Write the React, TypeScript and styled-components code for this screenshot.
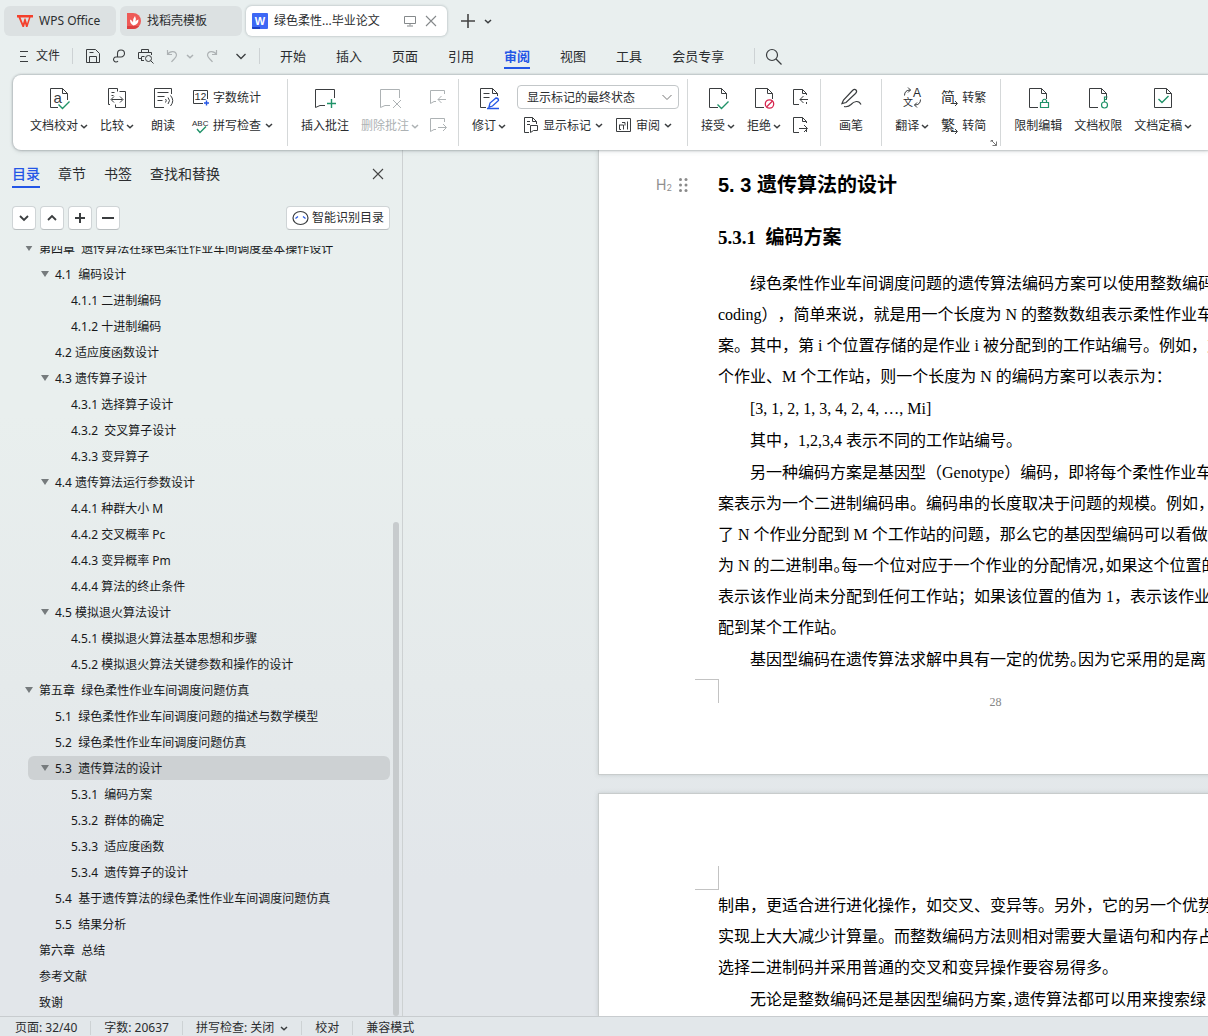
import React from "react";
import styled, { createGlobalStyle, css } from "styled-components";

const UI_FONT = `"Noto Sans", "Noto Sans CJK SC", sans-serif`;
const DOC_FONT = `"Liberation Serif", "Noto Sans CJK SC", serif`;
const INK = "#2b2d2f";
const BLUE = "#2456e6";
const GREEN = "#1f9268";
const FADED = "#adb2b4";

const GlobalStyle = createGlobalStyle`
  *, *::before, *::after { box-sizing: border-box; }
  body { margin: 0; overflow: hidden; }
  button, select { font: inherit; color: inherit; margin: 0; padding: 0; border: 0; background: none; cursor: pointer; }
  svg { display: block; flex: none; overflow: visible; }
`;

const Shell = styled.div`
  display: flex;
  flex-direction: column;
  height: 100vh;
  overflow: hidden;
  font: 12px/16px ${UI_FONT};
  color: ${INK};
  background: linear-gradient(180deg, #e9efef 0%, #e9efee 40%, #e5eaeb 66%, #e2e6ea 85%, #e2e6ea 100%);
`;

/* ---------- title bar ---------- */

const TitleBar = styled.header`
  display: flex;
  align-items: center;
  gap: 4px;
  padding: 6px 4px 5px;
`;

const DocTab = styled.div<{ $width: number; $active?: boolean }>`
  display: flex;
  align-items: center;
  gap: 6px;
  width: ${(p) => p.$width}px;
  height: 30px;
  padding: 0 8px 0 6px;
  border-radius: 6px;
  background: ${(p) => (p.$active ? "#fff" : "#dce1e2")};
  box-shadow: ${(p) => (p.$active ? "0 0 2px 1px rgba(90, 105, 110, 0.22)" : "none")};
`;

const TabTitle = styled.button<{ $inset?: boolean }>`
  display: flex;
  align-items: center;
  gap: 6px;
  flex: 1;
  white-space: nowrap;
  padding-left: ${(p) => (p.$inset ? 7 : 0)}px;
`;

const NewTab = styled.div`
  display: flex;
`;

const PlainButton = styled.button<{ $w: number }>`
  display: grid;
  place-items: center;
  width: ${(p) => p.$w}px;
  height: 24px;
`;

/* ---------- menu row ---------- */

const MenuRow = styled.nav`
  display: flex;
  align-items: center;
  height: 30px;
  margin-bottom: 4px;
  padding-left: 18px;
`;

const FileMenu = styled.button`
  display: flex;
  align-items: center;
  gap: 6px;
  margin-right: 12px;
`;

const Rule = styled.span`
  width: 1px;
  height: 16px;
  background: #cdd2d4;
`;

const QuickTools = styled.div`
  display: flex;
  align-items: center;
  padding: 0 7px;
`;

const MenuTabs = styled.div`
  display: flex;
  gap: 30px;
  padding: 0 30px 0 20px;
`;

const MenuTab = styled.button<{ $active?: boolean }>`
  height: 26px;
  padding-top: 1px;
  font-size: 13px;
  line-height: 20px;
  border-bottom: 2px solid transparent;
  ${(p) => p.$active && css`
    color: ${BLUE};
    font-weight: 700;
    border-bottom-color: ${BLUE};
  `}
`;

/* ---------- ribbon ---------- */

const Ribbon = styled.section`
  position: relative;
  z-index: 1;
  display: flex;
  height: 75px;
  margin-left: 13px;
  padding: 4px 0 4px 4px;
  flex: none;
  border-radius: 8px 0 0 8px;
  background: #fff;
  box-shadow: 0 0 2px 1px rgba(100, 110, 115, 0.35), 0 2px 4px rgba(100, 110, 115, 0.15);
`;

const Group = styled.div`
  position: relative;
  display: flex;
  padding: 0 7px;
  flex: none;
  & + & { border-left: 1px solid #d5d8d9; }
`;

const BigTool = styled.button<{ $off?: boolean }>`
  display: flex;
  flex-direction: column;
  align-items: center;
  gap: 8px;
  min-width: 46px;
  padding: 7px 6px 0;
  white-space: nowrap;
  color: ${(p) => (p.$off ? FADED : INK)};
`;

const Label = styled.span`
  display: flex;
  align-items: center;
  gap: 2px;
`;

const Stack = styled.div`
  display: flex;
  flex-direction: column;
  gap: 4px;
  padding: 6px 1px 0 0;
`;

const IconStack = styled(Stack)`
  padding-right: 0;
`;

const RowOfTools = styled.div`
  display: flex;
  padding-left: 4px;
`;

const SmallTool = styled.button`
  display: flex;
  align-items: center;
  gap: 4px;
  height: 24px;
  padding: 0 6px;
  white-space: nowrap;
`;

const SmallLabel = styled.span`
  padding-top: 2px;
`;

const SelectBox = styled.div`
  display: grid;
  align-items: center;
  width: 162px;
  height: 24px;
  margin-left: 5px;
  > * { grid-area: 1 / 1; }
  > svg { justify-self: end; margin-right: 6px; pointer-events: none; }
`;

const MarkupSelect = styled.select`
  width: 100%;
  height: 24px;
  padding: 2px 24px 0 9px;
  appearance: none;
  border: 1px solid #c3c7c9;
  border-radius: 4px;
  background: #fff;
`;

const Launcher = styled.button`
  position: absolute;
  right: 2px;
  bottom: -1px;
`;

/* ---------- workspace ---------- */

const Workspace = styled.main`
  display: flex;
  flex: 1;
  min-height: 0;
`;

const Sidebar = styled.aside`
  display: flex;
  flex-direction: column;
  flex: none;
  width: 403px;
  border-right: 1px solid #cdd1d2;
`;

const SideTabs = styled.div`
  display: flex;
  align-items: flex-start;
  gap: 18px;
  height: 40px;
  padding: 12px 12px 0;
`;

const SideTab = styled.button<{ $active?: boolean }>`
  height: 26px;
  font-size: 14px;
  line-height: 24px;
  border-bottom: 2px solid ${(p) => (p.$active ? BLUE : "transparent")};
  color: ${(p) => (p.$active ? BLUE : INK)};
  font-weight: ${(p) => (p.$active ? 500 : 400)};
`;

const CloseButton = styled(PlainButton)`
  margin-left: auto;
`;

const SideTools = styled.div`
  display: flex;
  gap: 4px;
  padding: 16px 12px;
`;

const ToolButton = styled.button`
  display: flex;
  align-items: center;
  justify-content: center;
  gap: 3px;
  min-width: 24px;
  height: 24px;
  padding: 0 5px;
  border: 1px solid #cfd4d6;
  border-bottom-color: #b9bec0;
  border-radius: 4px;
  background: #fff;
`;

const SmartButton = styled(ToolButton)`
  margin-left: auto;
`;

const Outline = styled.div`
  display: flex;
  flex: 1;
  min-height: 0;
  gap: 3px;
  overflow: hidden;
`;

const OutlineList = styled.ul`
  flex: 1;
  margin: -11px 0 0;
  padding: 0;
  list-style: none;
`;

const OutlineItem = styled.li<{ $level: number; $selected?: boolean }>`
  display: flex;
  align-items: center;
  height: 24px;
  margin: 1px 0 2px ${(p) => p.$level * 16 - 4}px;
  border-radius: 6px;
  background: ${(p) => (p.$selected ? "#cdd1d3" : "none")};
  color: #17191b;
`;

const Twisty = styled.span`
  display: flex;
  justify-content: center;
  width: 27px;
  padding-left: 6px;
`;

const OutlineLink = styled.a`
  padding-top: 2px;
  color: inherit;
  text-decoration: none;
  white-space: pre;
`;

const ScrollTrack = styled.div`
  width: 6px;
  margin-right: 3px;
  padding-top: 276px;
`;

const ScrollThumb = styled.div`
  height: 100%;
  border-radius: 3px;
  background: #c7cbcd;
`;

/* ---------- document ---------- */

const Canvas = styled.div`
  flex: 1;
  min-width: 0;
  padding-left: 195px;
  overflow: hidden;
`;

const Page = styled.article`
  width: 795px;
  margin-bottom: 18px;
  border: 1px solid #c8cccc;
  background: #fff;
  color: #000;
  box-shadow: 0 0 4px rgba(110, 120, 120, 0.25);
  font-family: ${DOC_FONT};
`;

const ContinuedPage = styled(Page)`
  border-top: 0;
  padding-top: 20px;
`;

const HeadingRow = styled.div`
  display: flex;
  align-items: center;
  height: 30px;
  margin-bottom: 22px;
`;

const Gutter = styled.div`
  display: flex;
  align-items: center;
  gap: 7px;
  width: 119px;
  padding-left: 57px;
  color: #8f8f8f;
  font: 14px/16px Inter, sans-serif;
  sub { font-size: 9px; line-height: 8px; vertical-align: -1px; }
`;

const Heading2 = styled.h2`
  margin: 0;
  font: 700 20px/32px "Liberation Sans", "Noto Sans CJK SC", sans-serif;
  white-space: pre;
`;

const Heading3 = styled.h3`
  margin: 0 0 14px 119px;
  font-size: 19px;
  line-height: 32px;
  white-space: pre;
`;

const Body = styled.div`
  padding: 0 0 0 119px;
  font-size: 16px;
  line-height: 31px;
  text-spacing-trim: space-all;
`;

const Para = styled.p<{ $cont?: boolean }>`
  margin: 0 0 1px;
  text-indent: ${(p) => (p.$cont ? 0 : 32)}px;
  white-space: pre;
`;

const Half = styled.span`
  font-feature-settings: "halt";
`;

const PageFoot = styled.footer`
  display: grid;
  grid-template-columns: 120px 1fr 120px;
  height: 95px;
  margin-top: 4px;
`;

const PageHead = styled.div`
  display: grid;
  grid-template-columns: 120px 1fr;
  align-items: end;
  height: 96px;
`;

const CropMark = styled.i<{ $at: "top" | "bottom" }>`
  justify-self: end;
  width: 24px;
  height: 24px;
  border-right: 1px solid #c3c3c3;
  border-${(p) => p.$at}: 1px solid #c3c3c3;
`;

const PageNumber = styled.span`
  justify-self: center;
  padding-top: 15px;
  font-size: 12px;
  line-height: 16px;
  color: #858585;
`;

/* ---------- status bar ---------- */

const StatusBar = styled.footer`
  display: flex;
  align-items: center;
  gap: 13px;
  height: 20px;
  flex: none;
  padding: 2px 0 0 15px;
  border-top: 1px solid #c8cccf;
  background: #e2e7ea;
  white-space: nowrap;
`;

const StatusButton = styled.button`
  display: flex;
  align-items: center;
  gap: 6px;
`;

const StatusRule = styled(Rule)`
  height: 14px;
`;

/* ---------- icons ---------- */

type IconProps = { w?: number; h?: number; c?: string; s?: number; children: React.ReactNode };

const Svg = ({ w = 24, h = 24, c = "#3a3d3f", s = 1, children }: IconProps) => (
  <svg width={w} height={h} viewBox={`0 0 ${w} ${h}`} fill="none" stroke={c} strokeWidth={s} aria-hidden="true">
    {children}
  </svg>
);

const Chevron = ({ c = "#3a3d3f" }: { c?: string }) => (
  <Svg w={8} h={8} c={c} s={1.5}><path d="M1 3l3 2.8L7 3" /></Svg>
);

const WideChevron = () => <Svg w={12} h={12} s={1.3}><path d="M1.5 4 6 8.500 10.500 4" /></Svg>;

const Cross = ({ c = "#555" }: { c?: string }) => (
  <Svg w={12} h={12} c={c} s={1.1}><path d="M1 1l10 10M11 1 1 11" /></Svg>
);

const Sheet = ({ children }: { children?: React.ReactNode }) => (
  <Svg>
    <path d="M12 21.5H3.500v-19h12l5 5V13M15.500 2.500v5h5" />
    {children}
  </Svg>
);

const ProofIcon = () => (
  <Svg>
    <path d="M11 21.500H3.500v-19h12l5 5V14M15.500 2.500v5h5" />
    <text x="6.5" y="17" fontFamily="Liberation Sans" fontSize="15" fill="#3a3d3f" stroke="none">a</text>
    <path d="m11.500 18.500 4 4 7-7" stroke={GREEN} strokeWidth="1.4" />
  </Svg>
);

const CompareIcon = () => (
  <Svg>
    <path d="M5 18.500H3.500v-16h9v3M14.500 5.500h6v16h-10v-3M6.500 6.500h3M6.500 9.500h2" />
    <path d="M6.500 13.500h11M9 10.500l-3 3 3 3M15 10.500l3 3-3 3" />
  </Svg>
);

const ReadIcon = () => (
  <Svg>
    <path d="M13 21.500H3.500v-19h17V8M6.500 6.500h11M6.500 10.500h7M6.500 14.500h5" />
    <path d="M14.500 13q1.500 1.500 0 3.500M17 11.500q3 3 0 6.500M19.500 9.500q4.500 5 0 10.500" />
  </Svg>
);

const CountIcon = () => (
  <Svg w={17} h={18}>
    <path d="M11 15.500H1.500v-13h14V11" />
    <text x="2.5" y="12" fontFamily="Liberation Mono" fontSize="10" fill={INK} stroke="none">12</text>
    <path d="M14.500 12.500v5M12 15h5" stroke={BLUE} strokeWidth="1.4" />
  </Svg>
);

const SpellIcon = () => (
  <Svg w={17} h={18}>
    <text x="0" y="10" fontFamily="Liberation Sans" fontSize="8" fill={INK} stroke="none">ABC</text>
    <path d="m5 13 3 3.500 6-6" stroke={GREEN} strokeWidth="1.4" />
  </Svg>
);

const Bubble = ({ c, children }: { c?: string; children: React.ReactNode }) => (
  <Svg c={c}>
    <path d="M12 19.500H7l-4.500 2v-18h19V12" />
    {children}
  </Svg>
);

const SmallBubble = ({ next }: { next?: boolean }) => (
  <Svg w={18} h={18} c={FADED}>
    <path d="M7 13.500H5l-3.500 2v-13h14V6" />
    <path d={next ? "M9 11.500h8M14 8l3.500 3.500L14 15" : "M17 11.500H9M12.500 8 9 11.500l3.500 3.500"} />
  </Svg>
);

const ReviseIcon = () => (
  <Svg>
    <path d="M9 21.500H3.500v-19h12l5 5V10M15.500 2.500v5h5M6.500 7.500h6M6.500 11.500h6" />
    <path d="m12 21 1-4 6-5q2.500 0 2.500 2.500l-6 5.500zM10 22.500h12" stroke={BLUE} strokeWidth="1.3" />
  </Svg>
);

const MarkupIcon = () => (
  <Svg w={17} h={18}>
    <path d="M7 16.500H2.500v-15h8l4 4V8M10.500 1.500v4h4M5 5.500h3M5 8.500h3M8.500 16.500v-7h7v5h-4z" />
  </Svg>
);

const PaneIcon = () => (
  <Svg w={17} h={18}>
    <path d="M1.500 2.500h14v13h-14zM4 9h4.500v4.500M4.500 9v4.500H6M7 6.500h3v3M12.500 5.500v8" />
  </Svg>
);

const SmallSheet = ({ next }: { next?: boolean }) => (
  <Svg w={18} h={18}>
    <path d="M8 16.500H2.500v-15h9l4 4V7M11.500 1.500v4h4M15.500 14v2" />
    <path d={next ? "M8 12.500h8M13 9l3.500 3.500L13 16" : "M17 11.500H9M12.500 8 9 11.500l3.500 3.500"} />
  </Svg>
);

const PenIcon = () => (
  <Svg s={1.2}>
    <path d="M3 17.500 4.500 14l9-9.500q2-2 3.500-.5t-.5 3.500l-9.500 9z" />
    <path d="M5 20.500q4 1 7-2c3-3.500 8-4.500 10 0" />
  </Svg>
);

const TranslateIcon = () => (
  <Svg>
    <text x="13" y="11" fontFamily="Liberation Sans" fontSize="12" fill={INK} stroke="none">A</text>
    <text x="3" y="20" fontFamily="Noto Sans CJK SC" fontSize="10" fill={INK} stroke="none">文</text>
    <path d="M4.500 9.500q0-5.500 6-5.500M8 1.500 10.500 4 8 6.500M20.500 13.500q0 5.500-6 5.500M17 16.500 14.500 19l2.500 2.500" />
  </Svg>
);

const ConvertIcon = ({ glyph }: { glyph: string }) => (
  <Svg w={17} h={18}>
    <text x="0" y="14" fontFamily="Noto Sans CJK SC" fontSize="14" fill={INK} stroke="none">{glyph}</text>
    <path d="M10 15.500h6M14 13l2.500 2.500L14 18" />
  </Svg>
);

const Twist = () => (
  <svg width="8" height="6" viewBox="0 0 8 6" aria-hidden="true"><path d="M0 0h8L4 6z" fill="#767b7d" /></svg>
);

const Drag = () => (
  <svg width="9" height="14" viewBox="0 0 9 14" fill="#8a8a8a" aria-hidden="true">
    {[1.5, 7, 12.5].map((y) => (
      <g key={y}><circle cx="1.5" cy={y} r="1.5" /><circle cx="7" cy={y} r="1.5" /></g>
    ))}
  </svg>
);

/* ---------- data ---------- */

type Entry = { level: number; text: string; open?: boolean; selected?: boolean };

const entries: Entry[] = [
  { level: 1, text: "第四章  遗传算法在绿色柔性作业车间调度基本操作设计", open: true },
  { level: 2, text: "4.1  编码设计", open: true },
  { level: 3, text: "4.1.1 二进制编码" },
  { level: 3, text: "4.1.2 十进制编码" },
  { level: 2, text: "4.2 适应度函数设计" },
  { level: 2, text: "4.3 遗传算子设计", open: true },
  { level: 3, text: "4.3.1 选择算子设计" },
  { level: 3, text: "4.3.2  交叉算子设计" },
  { level: 3, text: "4.3.3 变异算子" },
  { level: 2, text: "4.4 遗传算法运行参数设计", open: true },
  { level: 3, text: "4.4.1 种群大小 M" },
  { level: 3, text: "4.4.2 交叉概率 Pc" },
  { level: 3, text: "4.4.3 变异概率 Pm" },
  { level: 3, text: "4.4.4 算法的终止条件" },
  { level: 2, text: "4.5 模拟退火算法设计", open: true },
  { level: 3, text: "4.5.1 模拟退火算法基本思想和步骤" },
  { level: 3, text: "4.5.2 模拟退火算法关键参数和操作的设计" },
  { level: 1, text: "第五章  绿色柔性作业车间调度问题仿真", open: true },
  { level: 2, text: "5.1  绿色柔性作业车间调度问题的描述与数学模型" },
  { level: 2, text: "5.2  绿色柔性作业车间调度问题仿真" },
  { level: 2, text: "5.3  遗传算法的设计", open: true, selected: true },
  { level: 3, text: "5.3.1  编码方案" },
  { level: 3, text: "5.3.2  群体的确定" },
  { level: 3, text: "5.3.3  适应度函数" },
  { level: 3, text: "5.3.4  遗传算子的设计" },
  { level: 2, text: "5.4  基于遗传算法的绿色柔性作业车间调度问题仿真" },
  { level: 2, text: "5.5  结果分析" },
  { level: 1, text: "第六章  总结" },
  { level: 1, text: "参考文献" },
  { level: 1, text: "致谢" },
];

const menuTabs = ["开始", "插入", "页面", "引用", "审阅", "视图", "工具", "会员专享"];

type ToolProps = { icon: React.ReactNode; label: string; drop?: boolean; off?: boolean };

const Big = ({ icon, label, drop, off }: ToolProps) => (
  <BigTool $off={off} disabled={off}>
    {icon}
    <Label>{label}{drop && <Chevron c={off ? FADED : undefined} />}</Label>
  </BigTool>
);

const Small = ({ icon, label, drop }: ToolProps) => (
  <SmallTool>{icon}<SmallLabel>{label}</SmallLabel>{drop && <Chevron />}</SmallTool>
);

/* ---------- sections ---------- */

const Titles = () => (
  <TitleBar>
    <DocTab $width={112}>
      <TabTitle $inset>
        <svg width="16" height="12" viewBox="0 0 16 12" aria-hidden="true">
          <path d="M0 0h16v2.500h-2.500L10.500 12H9L8 8.500 7 12H5.500L1.500 2.500H0zM3.500 2.500 6 8.500 7.500 3.500h1L10 8.500l2-6z" fill="#f4402c" fillRule="evenodd" />
        </svg>
        WPS Office
      </TabTitle>
    </DocTab>
    <DocTab $width={122}>
      <TabTitle>
        <svg width="15" height="16" viewBox="0 0 15 16" aria-hidden="true">
          <path d="M1 0h6a8 8 0 0 1 0 16H1z" fill="#ee5a57" />
          <path d="M1 13h12q-2 3-6 3H1z" fill="#dd3f40" />
          <path d="M7.500 12.500Q4 11 4 6.500q2.500 1 3 3Q7 5 9 3q1.500 3 .5 5.500 1-1.500 3-2 0 5-5 6z" fill="#fff" />
        </svg>
        找稻壳模板
      </TabTitle>
    </DocTab>
    <DocTab $width={201} $active>
      <TabTitle>
        <svg width="16" height="16" viewBox="0 0 16 16" aria-hidden="true">
          <rect width="16" height="16" rx="1" fill="#3d68f5" />
          <path d="M0 14h8v2H1q-1 0-1-1z" fill="#1b3fc4" />
          <text x="8" y="11.500" textAnchor="middle" fontFamily="Liberation Sans" fontWeight="700" fontSize="11" fill="#fff">W</text>
        </svg>
        绿色柔性...毕业论文
      </TabTitle>
      <PlainButton $w={14} aria-label="显示模式">
        <Svg w={12} h={12} c="#85898b"><path d="M.5 1.500h11v7H.5zM6 8.500v2M3 11h6" /></Svg>
      </PlainButton>
      <PlainButton $w={16} aria-label="关闭标签"><Cross c="#85898b" /></PlainButton>
    </DocTab>
    <NewTab>
      <PlainButton $w={33} aria-label="新建"><Svg w={14} h={14} c="#444" s={1.6}><path d="M7 0v14M0 7h14" /></Svg></PlainButton>
      <PlainButton $w={8} aria-label="标签列表"><Chevron /></PlainButton>
    </NewTab>
  </TitleBar>
);

const Menu = () => (
  <MenuRow>
    <FileMenu>
      <Svg w={12} h={12}><path d="M2 1.500h8M2 6.500h6M2 11.500h8" /></Svg>
      文件
    </FileMenu>
    <Rule />
    <QuickTools>
      <PlainButton $w={26} aria-label="保存">
        <Svg w={16} h={16}><path d="M1.500 1.500h9l4 4v9h-13zM4.500 14.500v-6h7v6M4.500 4.500h4" /></Svg>
      </PlainButton>
      <PlainButton $w={26} aria-label="输出">
        <Svg w={14} h={16} s={1.1}><path d="M5.500 8.500V5.500a3.500 3.500 0 1 1 3.500 3.500H4a2.500 2.500 0 1 0 2 4" /></Svg>
      </PlainButton>
      <PlainButton $w={26} aria-label="打印预览">
        <Svg w={17} h={16}><path d="M4.500 4.500v-3h7v3M7 12.500H4.500M4.500 9v4M4 10.500H1.500v-6h13V7M4.500 8.500h3" /><circle cx="11.500" cy="10.500" r="3" /><path d="m13.500 12.500 3 3" /></Svg>
      </PlainButton>
      <PlainButton $w={28} aria-label="撤销">
        <Svg w={12} h={14} c={FADED} s={1.2}><path d="M1.500 1v4.500H6M1.500 5.500C4 1.500 10 1.500 10.500 6c0 3-3 4-5 7" /></Svg>
      </PlainButton>
      <PlainButton $w={8} aria-label="撤销列表"><Chevron c={FADED} /></PlainButton>
      <PlainButton $w={36} aria-label="恢复">
        <Svg w={12} h={14} c={FADED} s={1.2}><path d="M10.500 1v4.500H6M10.500 5.500C8 1.500 2 1.500 1.500 6c0 3 3 4 5 7" /></Svg>
      </PlainButton>
      <PlainButton $w={22} aria-label="更多"><WideChevron /></PlainButton>
    </QuickTools>
    <Rule />
    <MenuTabs>
      {menuTabs.map((t) => <MenuTab key={t} $active={t === "审阅"}>{t}</MenuTab>)}
    </MenuTabs>
    <Rule />
    <PlainButton $w={37} aria-label="搜索">
      <Svg w={17} h={17} s={1.2}><circle cx="7" cy="7" r="5.500" /><path d="m11 11 5.500 5.500" /></Svg>
    </PlainButton>
  </MenuRow>
);

const ReviewRibbon = () => (
  <Ribbon>
    <Group>
      <Big icon={<ProofIcon />} label="文档校对" drop />
      <Big icon={<CompareIcon />} label="比较" drop />
      <Big icon={<ReadIcon />} label="朗读" />
      <Stack>
        <Small icon={<CountIcon />} label="字数统计" />
        <Small icon={<SpellIcon />} label="拼写检查" drop />
      </Stack>
    </Group>
    <Group>
      <Big icon={<Bubble><path d="M18.500 13v9M14 17.500h9" stroke={GREEN} strokeWidth="1.4" /></Bubble>} label="插入批注" />
      <Big off drop icon={<Bubble c={FADED}><path d="m15 14 8 8M23 14l-8 8" /></Bubble>} label="删除批注" />
      <IconStack>
        <PlainButton $w={26} aria-label="上一条批注"><SmallBubble /></PlainButton>
        <PlainButton $w={26} aria-label="下一条批注"><SmallBubble next /></PlainButton>
      </IconStack>
    </Group>
    <Group>
      <Big icon={<ReviseIcon />} label="修订" drop />
      <Stack>
        <SelectBox>
          <MarkupSelect aria-label="标记显示方式" defaultValue="final">
            <option value="final">显示标记的最终状态</option>
          </MarkupSelect>
          <Svg w={12} h={12} c="#777"><path d="M1.500 4 6 8.500 10.500 4" /></Svg>
        </SelectBox>
        <RowOfTools>
          <Small icon={<MarkupIcon />} label="显示标记" drop />
          <Small icon={<PaneIcon />} label="审阅" drop />
        </RowOfTools>
      </Stack>
    </Group>
    <Group>
      <Big icon={<Sheet><path d="m11.500 18.500 4 4 7-7" stroke={GREEN} strokeWidth="1.4" /></Sheet>} label="接受" drop />
      <Big icon={<Sheet><g stroke="#d6264f" strokeWidth="1.3"><circle cx="17.500" cy="18" r="4.200" /><path d="m14.500 21 6-6" /></g></Sheet>} label="拒绝" drop />
      <IconStack>
        <PlainButton $w={26} aria-label="上一条修订"><SmallSheet /></PlainButton>
        <PlainButton $w={26} aria-label="下一条修订"><SmallSheet next /></PlainButton>
      </IconStack>
    </Group>
    <Group><Big icon={<PenIcon />} label="画笔" /></Group>
    <Group>
      <Big icon={<TranslateIcon />} label="翻译" drop />
      <Stack>
        <Small icon={<ConvertIcon glyph="简" />} label="转繁" />
        <Small icon={<ConvertIcon glyph="繁" />} label="转简" />
      </Stack>
      <Launcher aria-label="更多选项"><Svg w={8} h={8} c="#777"><path d="M1 3V1.500h2M2 2l4.500 4.500M2.500 6.500h4v-4" /></Svg></Launcher>
    </Group>
    <Group>
      <Big icon={<Sheet><path d="M14.500 16.500h8v5h-8zM16.500 16.500v-2q2-2.500 4 0v2" stroke={GREEN} strokeWidth="1.2" /></Sheet>} label="限制编辑" />
      <Big icon={<Sheet><g stroke={GREEN} strokeWidth="1.2"><circle cx="18.500" cy="19" r="3" /><path d="M18.500 16v-5h3M18.500 13.500h2.500" /></g></Sheet>} label="文档权限" />
      <Big drop icon={
        <Svg><path d="M15.500 2.500h-12v19h17v-14zv5h5" /><path d="m7.500 13 3.500 3.500 6.500-6.500" stroke={GREEN} strokeWidth="1.4" /></Svg>
      } label="文档定稿" />
    </Group>
  </Ribbon>
);

const OutlinePane = () => (
  <Sidebar>
    <SideTabs>
      {["目录", "章节", "书签", "查找和替换"].map((t, i) => <SideTab key={t} $active={i === 0}>{t}</SideTab>)}
      <CloseButton $w={24} aria-label="关闭"><Cross c="#444" /></CloseButton>
    </SideTabs>
    <SideTools>
      <ToolButton aria-label="展开"><Svg w={12} h={12} s={1.8}><path d="M2 4l4 4 4-4" /></Svg></ToolButton>
      <ToolButton aria-label="折叠"><Svg w={12} h={12} s={1.8}><path d="M2 8l4-4 4 4" /></Svg></ToolButton>
      <ToolButton aria-label="添加"><Svg w={12} h={12} s={2}><path d="M6 1v10M1 6h10" /></Svg></ToolButton>
      <ToolButton aria-label="删除"><Svg w={12} h={12} s={2}><path d="M0 6h12" /></Svg></ToolButton>
      <SmartButton>
        <Svg w={17} h={16} s={1.2}>
          <ellipse cx="8.500" cy="8" rx="7.500" ry="6.500" />
          <path d="M3.500 8.500 6 6.500M13.500 8.500 11 6.500" stroke={BLUE} />
        </Svg>
        智能识别目录
      </SmartButton>
    </SideTools>
    <Outline>
      <OutlineList>
        {entries.map((e) => (
          <OutlineItem key={e.text} $level={e.level} $selected={e.selected}>
            <Twisty>{e.open && <Twist />}</Twisty>
            <OutlineLink href="#">{e.text}</OutlineLink>
          </OutlineItem>
        ))}
      </OutlineList>
      <ScrollTrack><ScrollThumb /></ScrollTrack>
    </Outline>
  </Sidebar>
);

const DocumentView = () => (
  <Canvas>
    <ContinuedPage>
      <HeadingRow>
        <Gutter><span>H<sub>2</sub></span><Drag /></Gutter>
        <Heading2>5. 3 遗传算法的设计</Heading2>
      </HeadingRow>
      <Heading3>5.3.1  编码方案</Heading3>
      <Body>
        <Para>
          绿色柔性作业车间调度问题的遗传算法编码方案可以使用整数编码<br />
          coding），简单来说，就是用一个长度为 N 的整数数组表示柔性作业车<br />
          案。其中，第 i 个位置存储的是作业 i 被分配到的工作站编号。例如，对<br />
          个作业、M 个工作站，则一个长度为 N 的编码方案可以表示为：
        </Para>
        <Para>[3, 1, 2, 1, 3, 4, 2, 4, …, Mi]</Para>
        <Para>其中，1,2,3,4 表示不同的工作站编号。</Para>
        <Para>
          另一种编码方案是基因型（Genotype）编码，即将每个柔性作业车<br />
          案表示为一个二进制编码串。编码串的长度取决于问题的规模。例如，<br />
          了 N 个作业分配到 M 个工作站的问题，那么它的基因型编码可以看做<br />
          为 N 的二进制串<Half>。</Half>每一个位对应于一个作业的分配情况<Half>，</Half>如果这个位置的<br />
          表示该作业尚未分配到任何工作站；如果该位置的值为 1，表示该作业<br />
          配到某个工作站。
        </Para>
        <Para>基因型编码在遗传算法求解中具有一定的优势<Half>。</Half>因为它采用的是离</Para>
      </Body>
      <PageFoot>
        <CropMark $at="top" />
        <PageNumber>28</PageNumber>
      </PageFoot>
    </ContinuedPage>
    <Page>
      <PageHead><CropMark $at="bottom" /></PageHead>
      <Body>
        <Para $cont>
          制串，更适合进行进化操作，如交叉、变异等。另外，它的另一个优势<br />
          实现上大大减少计算量。而整数编码方法则相对需要大量语句和内存占<br />
          选择二进制码并采用普通的交叉和变异操作要容易得多。
        </Para>
        <Para>无论是整数编码还是基因型编码方案<Half>，</Half>遗传算法都可以用来搜索绿</Para>
      </Body>
    </Page>
  </Canvas>
);

const Status = () => (
  <StatusBar>
    <span>页面: 32/40</span>
    <StatusRule />
    <span>字数: 20637</span>
    <StatusRule />
    <StatusButton>拼写检查: 关闭 <Chevron /></StatusButton>
    <StatusRule />
    <StatusButton>校对</StatusButton>
    <StatusRule />
    <span>兼容模式</span>
  </StatusBar>
);

export default function App() {
  return (
    <Shell>
      <GlobalStyle />
      <Titles />
      <Menu />
      <ReviewRibbon />
      <Workspace>
        <OutlinePane />
        <DocumentView />
      </Workspace>
      <Status />
    </Shell>
  );
}
